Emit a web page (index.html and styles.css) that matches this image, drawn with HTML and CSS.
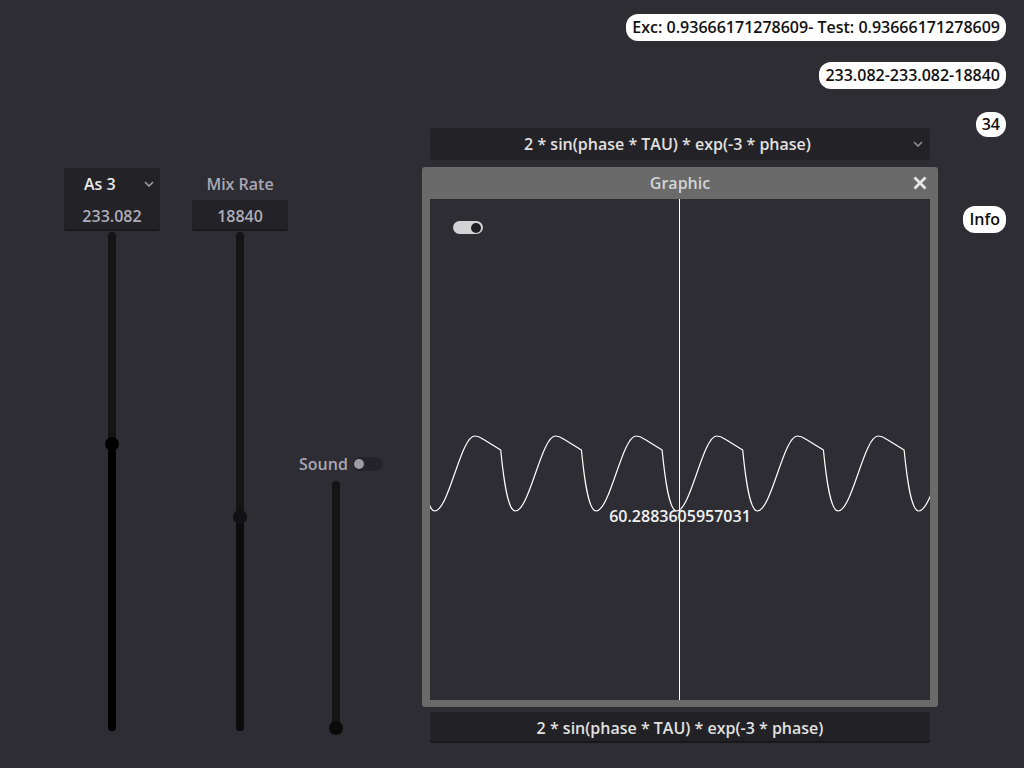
FILE: index.html
```html
<!DOCTYPE html>
<html>
<head>
<meta charset="utf-8">
<link rel="stylesheet" href="styles.css">
</head>
<body>
<div class="app">
  <div class="stats">
    <span class="pill">Exc: 0.93666171278609- Test: 0.93666171278609</span>
    <span class="pill">233.082-233.082-18840</span>
  </div>

  <div class="formula-select">
    <span class="select-text">2 * sin(phase * TAU) * exp(-3 * phase)</span>
    <span class="select-arrow">
      <svg width="10" height="6" viewBox="0 0 10 6"><polyline points="1,1 5,5 9,1" fill="none" stroke="#8f8e96" stroke-width="1.6"/></svg>
    </span>
  </div>

  <div class="count"><span class="pill">34</span></div>

  <div class="controls">
    <div class="col col-note">
      <div class="option">
        <span class="option-text">As 3</span>
        <svg class="option-arrow" width="10" height="6" viewBox="0 0 10 6"><polyline points="1,1 5,5 9,1" fill="none" stroke="#a09fa6" stroke-width="1.6"/></svg>
      </div>
      <div class="field">233.082</div>
      <div class="slider-wrap">
        <div class="track tall">
          <div class="fill fill-active" style="height:287px"></div>
          <div class="grabber grabber-active" style="top:212px"></div>
        </div>
      </div>
    </div>

    <div class="col col-rate">
      <div class="caption">Mix Rate</div>
      <div class="field">18840</div>
      <div class="slider-wrap">
        <div class="track tall">
          <div class="fill" style="height:214px"></div>
          <div class="grabber" style="top:285px"></div>
        </div>
      </div>
    </div>

    <div class="col col-sound">
      <div class="sound-row">
        <span class="caption-inline">Sound</span>
        <span class="switch-off"><span class="knob-off"></span></span>
      </div>
      <div class="track short">
        <div class="grabber grabber-bottom" style="top:247px"></div>
      </div>
    </div>
  </div>

  <div class="center">
    <div class="window">
      <div class="titlebar">
        <span></span>
        <span class="title">Graphic</span>
        <span class="close">
          <svg width="14" height="14" viewBox="0 0 14 14"><line x1="1.5" y1="1.5" x2="12.5" y2="12.5" stroke="#e8e8e8" stroke-width="2.6"/><line x1="12.5" y1="1.5" x2="1.5" y2="12.5" stroke="#e8e8e8" stroke-width="2.6"/></svg>
        </span>
      </div>
      <div class="content">
        <svg class="plot" width="500" height="501" viewBox="430 199 500 501">
          <line x1="679.5" y1="199" x2="679.5" y2="700" stroke="#ffffff" stroke-width="1"/>
          <path fill="none" stroke="#ffffff" stroke-width="1.2" stroke-linejoin="round" d="M354,511 C368,511 380,436 394,436 C398,436 400,437.5 403,439.5 L420,450 C423,480 427,511 434.7,511 C448.7,511 460.7,436 474.7,436 C478.7,436 480.7,437.5 483.7,439.5 L500.7,450 C503.7,480 507.7,511 515.4,511 C529.4,511 541.4,436 555.4,436 C559.4,436 561.4,437.5 564.4,439.5 L581.4,450 C584.4,480 588.4,511 596.1,511 C610.1,511 622.1,436 636.1,436 C640.1,436 642.1,437.5 645.1,439.5 L662.1,450 C665.1,480 669.1,511 676.7,511 C690.7,511 702.7,436 716.7,436 C720.7,436 722.7,437.5 725.7,439.5 L742.7,450 C745.7,480 749.7,511 757.4,511 C771.4,511 783.4,436 797.4,436 C801.4,436 803.4,437.5 806.4,439.5 L823.4,450 C826.4,480 830.4,511 838.1,511 C852.1,511 864.1,436 878.1,436 C882.1,436 884.1,437.5 887.1,439.5 L904.1,450 C907.1,480 911.1,511 918.7,511 C932.7,511 944.7,436 958.7,436"/>
        </svg>
        <span class="switch-on"><span class="knob-on"></span></span>
        <span class="value-label">60.2883605957031</span>
      </div>
    </div>
    <div class="line-edit">2 * sin(phase * TAU) * exp(-3 * phase)</div>
  </div>

  <div class="info"><span class="pill">Info</span></div>
</div>
</body>
</html>
```

FILE: styles.css
```css
* { box-sizing: border-box; }

html, body {
  margin: 0;
  padding: 0;
  background: #2e2d33;
}

body {
  font-family: "Open Sans", "Noto Sans", "DejaVu Sans", sans-serif;
  font-weight: 600;
  font-size: 16px;
  color: #e0e0e0;
}

.app {
  width: 1024px;
  height: 768px;
  display: grid;
  grid-template-columns: 422px 516px 86px;
  grid-template-rows: 112px 55px 1fr;
  overflow: hidden;
}

/* white pills, top right */
.pill {
  display: inline-block;
  background: #ffffff;
  color: #111111;
  height: 27px;
  line-height: 27px;
  padding: 0 6px;
  border-radius: 12px;
  white-space: nowrap;
}

.stats {
  grid-column: 2 / 4;
  grid-row: 1;
  display: flex;
  flex-direction: column;
  align-items: flex-end;
  gap: 21px;
  padding: 14px 18px 0 0;
}

.count {
  grid-column: 3;
  grid-row: 2;
  justify-self: end;
  align-self: start;
  padding-right: 18px;
}

.count .pill {
  height: 25px;
  line-height: 25px;
}

.info {
  grid-column: 3;
  grid-row: 3;
  justify-self: end;
  align-self: start;
  padding: 39px 18px 0 0;
}

/* formula dropdown */
.formula-select {
  grid-column: 2;
  grid-row: 2;
  align-self: start;
  margin: 16px 8px 0 8px;
  height: 32px;
  background: #232226;
  border-radius: 3px;
  display: flex;
  align-items: center;
}

.select-text {
  flex: 1;
  text-align: center;
  color: #e0e0e0;
}

.select-arrow {
  width: 25px;
  display: flex;
  justify-content: center;
  align-items: center;
}

/* left controls */
.controls {
  grid-column: 1;
  grid-row: 3;
  align-self: start;
  padding: 1px 0 0 64px;
  display: flex;
  align-items: flex-end;
}

.col {
  display: flex;
  flex-direction: column;
}

.col-note, .col-rate {
  width: 96px;
}

.col-rate {
  margin-left: 32px;
}

.col-sound {
  width: 82px;
  margin-left: 11px;
  align-items: flex-start;
}

.option {
  height: 32px;
  background: #232226;
  border-radius: 3px 3px 0 0;
  display: flex;
  align-items: center;
  padding: 0 6px 0 20px;
}

.option-text {
  flex: 1;
  color: #e8e8e8;
}

.caption {
  height: 32px;
  line-height: 32px;
  text-align: center;
  color: #a9a7b4;
}

.field {
  height: 31px;
  line-height: 32px;
  background: #232226;
  border-bottom: 2px solid #19191b;
  border-radius: 0 0 3px 3px;
  text-align: center;
  color: #aeacb9;
}

.col-rate .field {
  border-radius: 3px;
}

.slider-wrap {
  display: flex;
  justify-content: center;
  padding-top: 1px;
}

.track {
  position: relative;
  width: 8px;
  background: #141417;
  border-radius: 4px;
}

.track.tall { height: 499px; }

.track.short {
  height: 250px;
  margin: 10px 0 0 33px;
}

.fill {
  position: absolute;
  left: 0;
  right: 0;
  bottom: 0;
  background: #0c0c0e;
  border-radius: 4px;
}

.fill-active { background: #000000; }

.grabber {
  position: absolute;
  left: 50%;
  width: 14px;
  height: 14px;
  margin: -7px 0 0 -7px;
  border-radius: 50%;
  background: #111113;
}

.grabber-active { background: #000000; }
.grabber-bottom { background: #0a0a0b; }

.sound-row {
  display: flex;
  align-items: center;
  height: 14px;
}

.caption-inline {
  color: #a9a7b4;
  line-height: 14px;
}

.switch-off {
  position: relative;
  display: inline-block;
  width: 30px;
  height: 14px;
  margin-left: 5px;
  background: #242428;
  border-radius: 7px;
}

.knob-off {
  position: absolute;
  left: 1px;
  top: 2px;
  width: 10px;
  height: 10px;
  border-radius: 50%;
  background: #9d9ca2;
}

/* center: window */
.center {
  grid-column: 2;
  grid-row: 3;
  display: flex;
  flex-direction: column;
}

.window {
  width: 516px;
  height: 540px;
  background: #6a6a6a;
  border-radius: 3px;
  display: flex;
  flex-direction: column;
}

.titlebar {
  height: 32px;
  display: grid;
  grid-template-columns: 1fr auto 1fr;
  align-items: center;
}

.title {
  color: #d4d4d4;
  font-weight: 600;
}

.close {
  justify-self: end;
  padding-right: 11px;
  display: flex;
}

.content {
  position: relative;
  margin: 0 8px;
  height: 501px;
  background: #2e2d33;
  padding: 22px 0 0 23px;
}

.plot {
  position: absolute;
  left: 0;
  top: 0;
}

.switch-on {
  position: relative;
  display: block;
  width: 30px;
  height: 13px;
  background: #d3d3d5;
  border-radius: 7px;
}

.knob-on {
  position: absolute;
  right: 2px;
  top: 1.5px;
  width: 10px;
  height: 10px;
  border-radius: 50%;
  background: #1f1e22;
}

.value-label {
  position: absolute;
  left: 0;
  right: 0;
  top: 306px;
  text-align: center;
  color: #f2f2f2;
  line-height: 22px;
}

.line-edit {
  margin: 5px 8px 0 8px;
  height: 31px;
  line-height: 32px;
  background: #222125;
  border-bottom: 2px solid #19191b;
  border-radius: 3px;
  text-align: center;
  color: #e0e0e0;
}
```
